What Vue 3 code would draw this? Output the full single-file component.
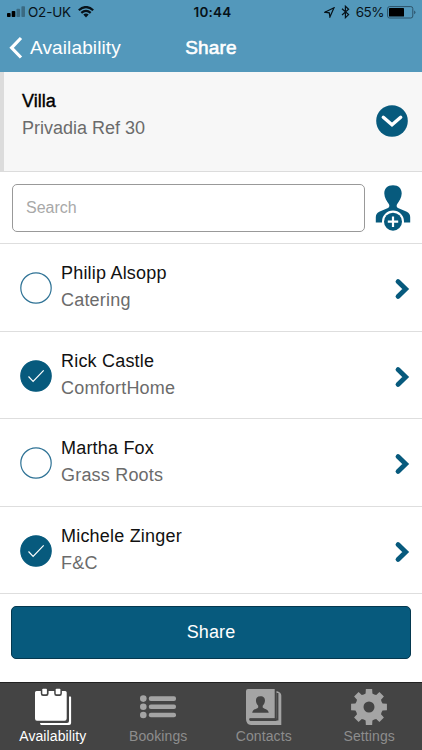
<template>
  <div class="screen">
    <header class="top-bar">
      <div class="status-bar">
        <div class="status-left">
          <svg class="signal" width="19" height="12" viewBox="0 0 19 12">
            <rect x="0" y="7" width="3.6" height="4" rx="0.8" />
            <rect x="4.7" y="5" width="3.6" height="6" rx="0.8" />
            <rect class="dim" x="9.5" y="2.7" width="3.6" height="8.3" rx="0.8" />
            <rect class="dim" x="14.4" y="0.2" width="3.6" height="10.8" rx="0.8" />
          </svg>
          <span class="carrier">O2-UK</span>
          <svg class="wifi" width="16" height="12" viewBox="0 0 16 12">
            <path d="M.8 4.3Q8-2.200 15.200 4.300M3.300 6.900Q8 2.800 12.700 6.900" />
            <path class="dot" d="M5.3 8.5Q8 6.5 10.7 8.5L8 11.4Z" />
          </svg>
        </div>
        <span class="clock">10:44</span>
        <div class="status-right">
          <svg class="location" width="11" height="11" viewBox="0 0 11 11">
            <path d="M10 .8.9 5.2 5.3 5.8 5.9 10Z" />
          </svg>
          <svg class="bluetooth" width="9" height="14" viewBox="0 0 9 14">
            <path d="M1 3.8 7.6 9.6 4.4 12.7V1.2L7.6 4.2 1 10" />
          </svg>
          <span class="percent">65%</span>
          <svg class="battery" width="29" height="13" viewBox="0 0 29 13">
            <rect class="shell" x="0.6" y="0.6" width="25.2" height="11.4" rx="2" />
            <rect x="2" y="2" width="15" height="8.6" rx="0.6" />
            <path class="tip" d="M27.2 4.4Q28.4 4.8 28.4 6.3T27.2 8.2Z" />
          </svg>
        </div>
      </div>

      <nav class="nav-bar">
        <button type="button" class="back">
          <svg width="14" height="24" viewBox="0 0 14 24">
            <path d="M12 2 2.6 11.8 12 21.5" />
          </svg>
          <span>Availability</span>
        </button>
        <h1>Share</h1>
      </nav>
    </header>

    <section class="villa">
      <div class="lines">
        <strong>Villa</strong>
        <span>Privadia Ref 30</span>
      </div>
      <svg class="expand" width="32" height="32" viewBox="0 0 32 32">
        <circle cx="16" cy="16" r="15.8" />
        <path d="M7.3 12.3 16 19.8 24.7 12.3" />
      </svg>
    </section>

    <div class="search-row">
      <input v-model="search" type="text" placeholder="Search" />
      <svg class="add-person" width="36" height="46" viewBox="0 0 36 46">
        <path d="M18 .2C12.400.2 9.200 3.700 9.300 8.500c.1 4.500 2.500 7.500 4.500 10.400.9 1.500.8 3-.8 4L4.200 26.800Q.8 28.500.8 32.200V37.400H35.200V32.200q0-3.700-3.400-5.400L23 22.900c-1.600-1-1.700-2.500-.8-4 2-2.900 4.400-5.900 4.500-10.400C26.800 3.700 23.600.2 18 .2Z" />
        <path class="ring" d="M18 25.600a11 11 0 0 0-11 11v1.800h22v-1.800a11 11 0 0 0-11-11Z" />
        <circle cx="18" cy="36.700" r="9" />
        <path class="plus" d="M12.800 36.700H23.200M18 31.500V41.900" />
      </svg>
    </div>

    <ul class="people">
      <li v-for="person in people" :key="person.name" @click="toggle(person)">
        <svg class="check" :class="{ on: person.selected }" width="32" height="32" viewBox="0 0 32 32">
          <circle cx="16" cy="16" r="15.2" />
          <path v-if="person.selected" d="M8.500 16.500 13.100 21.300 23.700 10.300" />
        </svg>
        <div class="lines">
          <span class="name">{{ person.name }}</span>
          <span>{{ person.company }}</span>
        </div>
        <svg class="arrow" width="16" height="22" viewBox="0 0 16 22">
          <path d="M4 3.600 11.700 11 4 18.400" />
        </svg>
      </li>
    </ul>

    <div class="action">
      <button type="button">Share</button>
    </div>

    <footer class="tab-bar">
      <button
        v-for="tab in tabs"
        :key="tab"
        type="button"
        :class="{ active: tab === activeTab }"
        @click="activeTab = tab"
      >
        <svg v-if="tab === 'Availability'" width="38" height="38" viewBox="0 0 38 38">
          <path d="M35 8.500h1.500q.6 0 .6.800V35q0 2-2 2H7.300q-1.200 0-1.300-2h27q2 0 2-2Z" />
          <path d="M2.500 3H6.800V5.500Q6.800 8 9 8h3.400q2.200 0 2.200-2.500V3h5.600v2.500q0 2.500 2.200 2.500h3.300q2.200 0 2.200-2.500V3h3.300q1.500 0 1.500 1.500v26q0 2.200-2.200 2.200H3Q1 32.700 1 30.500V4.500Q1 3 2.500 3Z" />
          <rect x="8.300" y=".8" width="4.600" height="5.400" rx=".8" />
          <rect x="21.700" y=".8" width="4.700" height="5.400" rx=".8" />
        </svg>
        <svg v-else-if="tab === 'Bookings'" width="38" height="38" viewBox="0 0 38 38">
          <circle cx="4.300" cy="10.600" r="3.300" />
          <circle cx="4.300" cy="18.800" r="3.300" />
          <circle cx="4.300" cy="27" r="3.300" />
          <rect x="9.800" y="8.300" width="27.200" height="4.600" rx="2" />
          <rect x="9.800" y="16.500" width="27.200" height="4.600" rx="2" />
          <rect x="9.800" y="24.700" width="27.200" height="4.600" rx="2" />
        </svg>
        <svg v-else-if="tab === 'Contacts'" width="38" height="38" viewBox="0 0 38 38">
          <path d="M3 1H29.700V30.200H5q-1.800.8.300 2.700H31.500V3q4.800 1 4.800 4.500V37H6Q1 36.500 1 31V3Q1 1 3 1Z" />
          <path class="cut" d="M4.600 31.400H32.400V5" />
          <path class="cut-fill" d="M15.400 8.300c-3.600 0-4.700 2.300-4.400 5 .2 1.800 1 3.300 2.200 4.400v1.700c-1.600 1.700-5.600 1.500-6 5.300h16.500c-.4-3.800-4.400-3.600-6-5.300v-1.700c1.200-1.100 2-2.600 2.200-4.400.3-2.700-.8-5-4.500-5Z" />
        </svg>
        <svg v-else width="38" height="38" viewBox="0 0 38 38">
          <path fill-rule="evenodd" :d="gearPath" />
        </svg>
        <span>{{ tab }}</span>
      </button>
    </footer>
  </div>
</template>

<script setup>
import { ref } from 'vue'

const search = ref('')
const activeTab = ref('Availability')
const tabs = ['Availability', 'Bookings', 'Contacts', 'Settings']

const people = ref([
  { name: 'Philip Alsopp', company: 'Catering', selected: false },
  { name: 'Rick Castle', company: 'ComfortHome', selected: true },
  { name: 'Martha Fox', company: 'Grass Roots', selected: false },
  { name: 'Michele Zinger', company: 'F&C', selected: true },
])

const toggle = (person) => {
  person.selected = !person.selected
}

// eight teeth, each described by [angle offset, radius] around its centre
const TOOTH = [[-22.5, 13.6], [-14, 14], [-10, 18.2], [10, 18.2], [14, 14]]

const gearPoints = Array.from({ length: 8 }, (_, i) => (
  TOOTH.map(([offset, radius]) => {
    const angle = ((i * 45 + offset) * Math.PI) / 180
    return `${(19 + radius * Math.sin(angle)).toFixed(2)} ${(19 - radius * Math.cos(angle)).toFixed(2)}`
  })
)).flat()

const gearPath = `M${gearPoints.join('L')}ZM19 13.500a5.500 5.500 0 1 0 0 11a5.500 5.500 0 1 0 0-11Z`
</script>

<style>
body {
  background: #fff;
}
</style>

<style scoped>
.screen {
  display: flex;
  flex-direction: column;
  height: 750px;
  overflow: hidden;
  background: #fff;
  font-family: "Liberation Sans", Arial, sans-serif;
}

* {
  box-sizing: border-box;
}

svg {
  display: block;
  flex: none;
}

button {
  padding: 0;
  border: 0;
  background: none;
  font-family: inherit;
}

.top-bar {
  flex: none;
  height: 72px;
  background: #5398bb;
}

.status-bar {
  display: grid;
  grid-template-columns: 1fr auto 1fr;
  align-items: center;
  height: 24px;
  padding: 0 6px 0 7px;
  color: #071219;
  font-family: Inter, sans-serif;
  font-size: 13.5px;
}

.status-left,
.status-right {
  display: flex;
  align-items: center;
}

.status-right {
  justify-content: flex-end;
}

.signal .dim {
  opacity: 0.3;
}

.carrier {
  margin-left: 2px;
  letter-spacing: -0.2px;
}

.wifi {
  margin-left: 7px;
  fill: none;
  stroke: #071219;
  stroke-width: 2.2;
}

.wifi .dot {
  fill: #071219;
  stroke: none;
}

.clock {
  padding-left: 2px;
  font-weight: 600;
  letter-spacing: 0.2px;
}

.location,
.bluetooth {
  fill: none;
  stroke: #071219;
  stroke-width: 1.2;
}

.location {
  margin-right: 6px;
}

.bluetooth {
  margin-right: 6px;
}

.percent {
  margin-right: 3px;
  letter-spacing: -0.5px;
}

.battery .shell {
  fill: none;
  stroke: #2c5268;
}

.battery .tip {
  fill: #2c5268;
}

.nav-bar {
  display: grid;
  grid-template-columns: 1fr auto 1fr;
  align-items: center;
  height: 48px;
  padding: 0 9px;
  color: #fff;
}

.back {
  display: flex;
  align-items: center;
  gap: 7px;
  color: #fff;
  font-size: 19px;
  letter-spacing: 0.12px;
}

.back svg {
  fill: none;
  stroke: #fff;
  stroke-width: 3.2;
}

h1 {
  margin: 0;
  font-size: 19px;
  font-weight: 400;
  letter-spacing: 0.2px;
  -webkit-text-stroke: 0.6px #fff;
}

.villa {
  display: flex;
  flex: none;
  align-items: flex-start;
  height: 100px;
  padding: 16px 14px 0 18px;
  border-bottom: 1px solid #dcdcdc;
  border-left: 4px solid #dcdcdc;
  background: #f7f7f7;
}

.lines {
  display: flex;
  flex: 1;
  flex-direction: column;
  color: #6b6b6b;
  font-size: 18px;
  line-height: 27px;
}

.villa strong {
  color: #000;
  font-weight: 400;
  -webkit-text-stroke: 0.4px #000;
}

.expand {
  margin-top: 17px;
  fill: #075a7d;
}

.expand path {
  fill: none;
  stroke: #fff;
  stroke-linecap: round;
  stroke-width: 3.4;
}

.search-row {
  display: flex;
  flex: none;
  align-items: center;
  gap: 10px;
  height: 72px;
  padding: 0 11px 0 12px;
  border-bottom: 1px solid #dedede;
}

input {
  flex: 1;
  min-width: 0;
  height: 48px;
  padding: 0 13px;
  border: 1px solid #999;
  border-radius: 5px;
  outline: none;
  background: #fff;
  color: #000;
  font-family: inherit;
  font-size: 16px;
}

input::placeholder {
  color: #a8a8a8;
}

.add-person {
  fill: #075a7d;
}

.add-person .ring {
  fill: #fff;
}

.add-person .plus {
  stroke: #fff;
  stroke-width: 2.2;
}

.people {
  flex: none;
  margin: 0;
  padding: 0;
  list-style: none;
}

.people li {
  display: flex;
  height: 87.6px;
  padding: 16px 12px 0 20px;
  border-bottom: 1px solid #dedede;
}

.people .lines {
  margin-left: 9px;
  letter-spacing: 0.2px;
}

.people .name {
  color: #111;
}

.check {
  margin-top: 12px;
  fill: none;
  stroke: #2e7295;
  stroke-width: 1.2;
}

.check.on circle {
  fill: #075a7d;
  stroke: #075a7d;
}

.check.on path {
  stroke: #fff;
}

.arrow {
  margin-top: 18px;
  fill: none;
  stroke: #075a7d;
  stroke-linecap: round;
  stroke-width: 4.8;
}

.action {
  flex: 1;
  padding: 12px 11px 0;
}

.action button {
  display: block;
  width: 100%;
  height: 53px;
  border: 1px solid #05384f;
  border-radius: 5px;
  background: #075a7d;
  color: #fff;
  font-size: 18px;
  letter-spacing: 0.1px;
}

.tab-bar {
  display: grid;
  flex: none;
  grid-template-columns: repeat(4, 1fr);
  height: 68px;
  border-top: 1px solid #222;
  background: #444;
}

.tab-bar button {
  display: flex;
  flex-direction: column;
  align-items: center;
  padding-top: 5px;
  color: #8d8d8d;
  font-size: 14px;
  line-height: 20px;
  letter-spacing: 0.1px;
}

.tab-bar button.active {
  color: #fff;
}

.tab-bar svg {
  fill: #a4a4a4;
}

.tab-bar .active svg {
  fill: #fff;
}

.tab-bar .cut {
  fill: none;
  stroke: #444;
  stroke-width: 2;
}

.tab-bar .cut-fill {
  fill: #444;
}
</style>
